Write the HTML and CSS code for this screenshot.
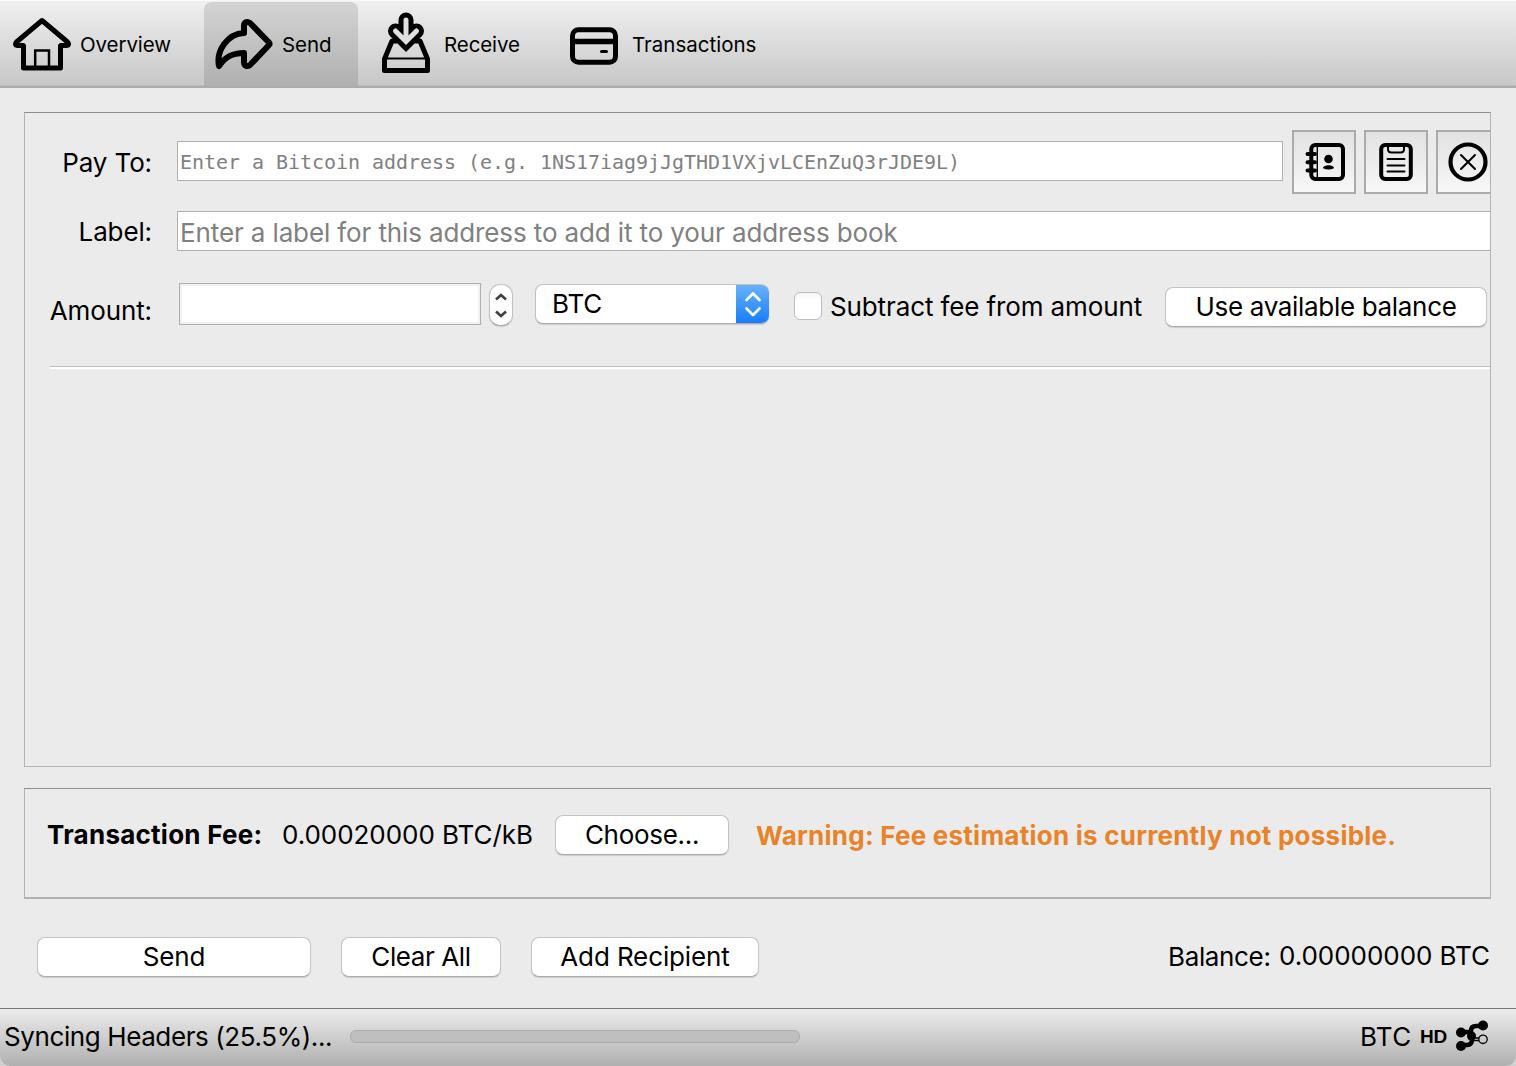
FILE: index.html
```html
<!DOCTYPE html>
<html lang="en">
<head>
<meta charset="utf-8">
<title>Bitcoin Wallet - Send</title>
<link rel="stylesheet" href="styles.css">
</head>
<body>
<div class="window">
  <nav class="toolbar">
    <div class="tab tab-overview">
      <svg class="tab-icon" width="60" height="56" viewBox="0 0 60 56" fill="none" stroke="#000" stroke-width="5" stroke-linejoin="round" stroke-linecap="round"><path d="M11 29.500H5Q2 28.500 4.500 26L30 4.500L55.500 26Q58 28.500 55 29.500H49"/><path d="M11.500 30V52H48.500V30"/><path stroke-width="2.500" stroke-linejoin="miter" d="M23.200 52V34.500H37V52"/></svg>
      <span class="tab-text">Overview</span>
    </div>
    <div class="tab tab-send active">
      <svg class="tab-icon" width="60" height="56" viewBox="0 0 60 56" fill="none" stroke="#000" stroke-width="6" stroke-linejoin="round"><path d="M30 18V11C30 7 33 6 36 8L55 27.500Q56 29 55 30L36 50C33 52 30 51 30 47V38C18 38 11 42 5 51C2 36 13 19 30 18Z"/></svg>
      <span class="tab-text">Send</span>
    </div>
    <div class="tab tab-receive">
      <svg class="tab-icon" width="50" height="62" viewBox="0 0 50 62" fill="none" stroke="#000" stroke-width="5"><path stroke-linejoin="round" d="M16 29H11L3.500 47V58.500H46.500V47L39 29H34"/><path stroke-width="2.200" d="M3 46.500H47"/><path stroke-width="15" stroke-linecap="round" d="M25 8V29.500M14.500 19L25 29.500L35.500 19"/><path stroke="#e0e0e0" stroke-width="5" stroke-linecap="round" d="M25 8V28M14.500 19L25 29.500L35.500 19"/></svg>
      <span class="tab-text">Receive</span>
    </div>
    <div class="tab tab-transactions">
      <svg class="tab-icon" width="48" height="38" viewBox="0 0 48 38" fill="none" stroke="#000"><rect x="2.500" y="2.800" width="43" height="32.500" rx="6" stroke-width="5"/><path stroke-width="5.500" d="M3 14.500H45"/><path stroke-width="3" stroke-linecap="round" d="M31.500 24.500H36.500"/></svg>
      <span class="tab-text">Transactions</span>
    </div>
  </nav>

  <main class="content">
    <section class="entries">
      <div class="row row-payto">
        <label class="caption">Pay To:</label>
        <div class="field field-address"><span>Enter a Bitcoin address (e.g. 1NS17iag9jJgTHD1VXjvLCEnZuQ3rJDE9L)</span></div>
        <div class="tool"><svg width="42" height="40" viewBox="0 0 42 40" fill="none" stroke="#000"><rect x="8.300" y="3" width="31.700" height="34" rx="4" stroke-width="4"/><path stroke-width="1.400" d="M14.300 3V36"/><path stroke-width="4" stroke-linecap="round" d="M4.500 12H12M4.500 20.300H12M4.500 28.500H12"/><circle cx="25.500" cy="17" r="4.300" fill="#000" stroke="none"/><path fill="#000" stroke="none" d="M20 26.200C20 22.300 31 22.300 31 26.200Q25.500 28.800 20 26.200Z"/></svg></div>
        <div class="tool"><svg width="36" height="40" viewBox="0 0 36 40" fill="none" stroke="#000" stroke-linecap="round"><rect x="3.200" y="3" width="29.600" height="34" rx="4" stroke-width="4"/><path stroke-width="2" d="M10 4V7Q10 10.500 13.500 10.500H22.500Q26 10.500 26 7V4M9.500 17H26.500M9.500 23.500H26.500M9.500 29.500H26.500"/></svg></div>
        <div class="tool"><svg width="40" height="40" viewBox="0 0 40 40" fill="none" stroke="#000"><circle cx="20" cy="20" r="17.500" stroke-width="4.200"/><path stroke-width="2" stroke-linecap="round" d="M13 13L27 27M27 13L13 27"/></svg></div>
      </div>
      <div class="row row-label">
        <label class="caption">Label:</label>
        <div class="field field-label"><span>Enter a label for this address to add it to your address book</span></div>
      </div>
      <div class="row row-amount">
        <label class="caption">Amount:</label>
        <div class="amount"></div>
        <div class="stepper"><svg width="14" height="28" viewBox="0 0 14 28" fill="none" stroke="#404040" stroke-width="2.600"><path d="M2 8.500L7 4L12 8.500M2 20.500L7 25L12 20.500"/></svg></div>
        <div class="select"><span class="t-unit">BTC</span><div class="select-arrows"><svg width="18" height="26" viewBox="0 0 18 26" fill="none" stroke="#fff" stroke-width="2.600" stroke-linecap="round" stroke-linejoin="round"><path d="M2.500 9L9 2.500L15.500 9M2.500 17.500L9 24L15.500 17.500"/></svg></div></div>
        <div class="checkbox"></div>
        <span class="t-subtract">Subtract fee from amount</span>
        <div class="button use-balance"><span class="t-use">Use available balance</span></div>
      </div>
      <div class="separator"></div>
    </section>

    <section class="fee">
      <strong class="t-fee">Transaction Fee:</strong>
      <span class="t-rate">0.00020000 BTC/kB</span>
      <div class="button choose"><span class="t-choose">Choose...</span></div>
      <strong class="t-warning">Warning: Fee estimation is currently not possible.</strong>
    </section>

    <section class="actions">
      <div class="button send"><span class="t-send">Send</span></div>
      <div class="button clear"><span class="t-clear">Clear All</span></div>
      <div class="button add"><span class="t-add">Add Recipient</span></div>
      <span class="t-balance">Balance:</span><span class="t-value">0.00000000 BTC</span>
    </section>
  </main>

  <footer class="statusbar">
    <span class="t-sync">Syncing Headers (25.5%)...</span>
    <div class="progress"></div>
    <span class="t-btc">BTC</span>
    <span class="t-hd">HD</span>
    <svg class="network" width="34" height="32" viewBox="0 0 34 32" fill="none" stroke="#000"><path stroke-width="4.500" d="M6 12H13Q17 12 17 15V19Q17 25 12 25H6M16 17V11Q16 6 21 6H27"/><circle cx="16.500" cy="16" r="4.500" fill="#000" stroke="none"/><g fill="#000" stroke="none"><circle cx="6" cy="12.500" r="5"/><circle cx="6" cy="26" r="5"/><circle cx="28" cy="5.500" r="5"/></g><path stroke-width="1.300" d="M19 18H24M19 20.500H24"/><circle cx="28" cy="19.300" r="4.200" stroke-width="1.300"/></svg>
  </footer>
</div>
</body>
</html>
```
FILE: styles.css
```css
* { box-sizing: border-box; }
body { margin: 0; background: #d0d0d0; font-family: Inter, "Liberation Sans", sans-serif; font-size: 26px; line-height: 32px; letter-spacing: -0.12px; color: #000; }
span, strong, label { white-space: nowrap; flex: none; }
svg { display: block; flex: none; }
.window { width: 1516px; height: 1066px; display: flex; flex-direction: column; background: #ebebeb; border-radius: 0 0 10px 10px; overflow: hidden; }

.toolbar { height: 88px; flex: none; display: flex; padding-top: 1px; background: linear-gradient(#f0f0f0, #c7c7c7); border-top: 1px solid #fafafa; border-bottom: 2px solid #ababab; box-shadow: inset 0 -1px #bdbdbd; }
.tab { display: flex; align-items: center; height: 84px; }
.tab-text { font-size: 20.5px; line-height: 26px; padding-top: 2px; letter-spacing: -0.1px; }
.tab-overview { width: 204px; padding-left: 12px; gap: 8px; }
.tab-send { width: 154px; padding-left: 10px; gap: 8px; }
.tab-send .tab-icon { margin-bottom: 3px; }
.active { background: linear-gradient(#d4d4d4, #b0b0b0); border-radius: 8px 8px 0 0; }
.tab-receive { width: 188px; padding-left: 23px; gap: 13px; }
.tab-receive .tab-icon { margin-bottom: 2px; }
.tab-transactions { padding-left: 24px; gap: 14px; }
.tab-transactions .tab-text { letter-spacing: 0; }
.tab-transactions .tab-icon { margin-top: 3px; }

.content { flex: 1; display: flex; flex-direction: column; padding: 24px 25px 0 24px; }
.entries { height: 655px; border: 1px solid #b2b2b2; border-top-color: #8e8e8e; overflow: hidden; padding-top: 17px; }
.row { display: flex; align-items: center; }
.caption { width: 127px; text-align: right; padding-top: 2px; }
.field { background: #fff; border: 1px solid #b0b0b0; height: 40px; display: flex; align-items: center; color: #808080; padding-left: 2px; flex: none; }
.row-payto { height: 64px; }
.field-address { width: 1106px; margin: 0 9px 2px 25px; font-family: "DejaVu Sans Mono", monospace; font-size: 20px; letter-spacing: -0.04px; padding-top: 1px; }
.tool { width: 64px; height: 64px; flex: none; border: 2px solid #ababab; background: linear-gradient(#e2e2e2, #f7f7f7); display: flex; align-items: center; justify-content: center; margin-right: 8px; }
.row-label { margin-top: 17px; height: 40px; }
.field-label { width: 1340px; margin-left: 25px; padding-top: 3px; }
.row-amount { margin-top: 31px; height: 44px; align-items: flex-start; }
.row-amount .caption { margin-top: 11px; }
.amount { width: 302px; height: 42px; margin: 1px 8px 0 27px; background: #fff; border: 1px solid #b0b0b0; box-shadow: inset 0 0 0 2px #f0f0f0; flex: none; }
.stepper { width: 24px; height: 42px; margin: 2px 22px 0 0; border: 1px solid #c2c2c2; border-bottom-color: #aaa; border-radius: 11px; background: #fff; display: flex; align-items: center; justify-content: center; flex: none; box-shadow: 0 1px 1px #ccc; }
.select { width: 234px; height: 40px; margin: 2px 25px 0 0; border: 1px solid #c2c2c2; border-bottom-color: #aaa; border-right: 0; border-radius: 8px; background: #fff; display: flex; align-items: center; justify-content: space-between; padding-left: 16px; flex: none; overflow: hidden; box-shadow: 0 1px 1px #ccc; }
.select-arrows { width: 33px; height: 40px; background: linear-gradient(#6bb3fa, #147cfb); display: flex; align-items: center; justify-content: center; }
.checkbox { width: 28px; height: 28px; margin: 10px 8px 0 0; border: 1px solid #bcbcbc; border-radius: 6px; background: linear-gradient(#f6f6f6, #fff 30%); flex: none; }
.t-subtract { width: 335px; margin-top: 9px; }
.button { height: 40px; border: 1px solid #c4c4c4; border-bottom-color: #aaa; border-radius: 8px; background: #fff; box-shadow: 0 1px 1px #ccc; display: flex; align-items: center; justify-content: center; flex: none; }
.use-balance { width: 322px; margin-top: 5px; }
.t-use { letter-spacing: -0.32px; }
.separator { margin: 40px 0 0 25px; height: 3px; background: #fff; border-top: 1px solid #bdbdbd; }

.fee { height: 111px; margin-top: 21px; border: 1px solid #b2b2b2; border-top-color: #8e8e8e; border-bottom-width: 2px; display: flex; align-items: flex-start; padding: 26px 0 0 22px; }
.t-fee { width: 235px; margin-top: 4px; letter-spacing: 0.25px; }
.t-rate { width: 273px; margin-top: 4px; letter-spacing: -0.05px; }
.choose { width: 174px; margin-right: 27px; }
.t-choose { letter-spacing: -0.3px; }
.t-warning { margin-top: 5px; color: #e8832a; letter-spacing: 0.24px; }

.actions { display: flex; align-items: center; padding-left: 13px; margin-top: 38px; height: 40px; }
.send { width: 274px; }
.clear { width: 160px; margin: 0 30px; }
.t-clear { letter-spacing: -0.4px; }
.add { width: 228px; }
.t-balance { margin-left: auto; width: 109px; letter-spacing: -0.35px; }
.t-value { width: 213px; text-align: right; margin: -2px 1px 0 0; letter-spacing: -0.05px; }

.statusbar { height: 58px; flex: none; display: flex; align-items: center; border-top: 1px solid #787878; background: linear-gradient(#ececec, #b0b0b0); padding: 0 27px 2px 4px; }
.t-sync { width: 346px; letter-spacing: -0.4px; }
.progress { width: 450px; height: 13px; border: 1px solid #ababab; border-radius: 6px; background: #bfbfbf; flex: none; }
.t-btc { margin-left: auto; width: 60px; letter-spacing: 0.3px; }
.t-hd { width: 35px; font-size: 19px; font-weight: 700; font-family: "Liberation Sans", Arial, sans-serif; }
.network { margin-top: -2px; }
```
